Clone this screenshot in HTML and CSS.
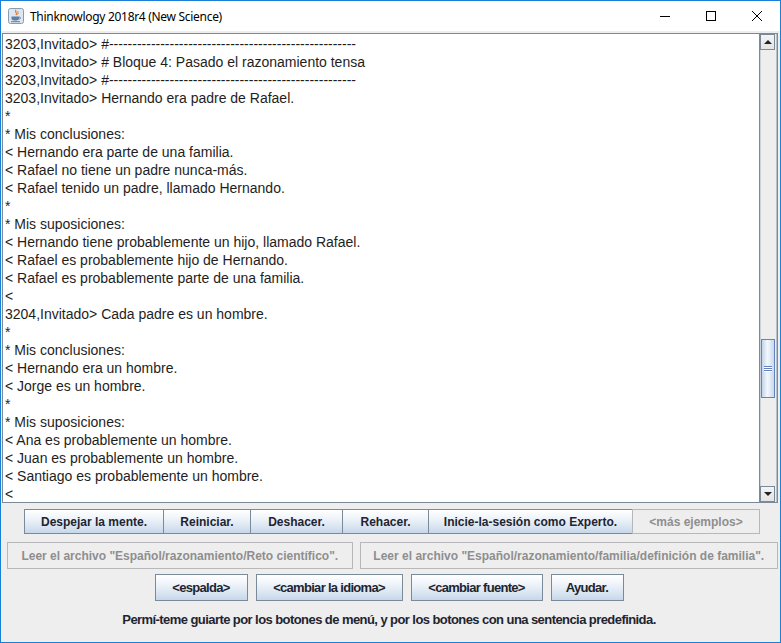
FILE: index.html
```html
<!DOCTYPE html>
<html lang="es">
<head>
<meta charset="utf-8">
<title>Thinknowlogy 2018r4 (New Science)</title>
<link rel="stylesheet" href="styles.css">
</head>
<body>
<div class="window">
  <div class="titlebar">
    <svg class="appicon" width="16" height="16" viewBox="0 0 16 16">
      <rect x="0.5" y="0.5" width="15" height="15" rx="2" fill="#dfe6ee" stroke="#8a9bb0"/>
      <path d="M8 2 C6 4 10 5 8 7" stroke="#e07a1f" stroke-width="1.2" fill="none"/>
      <path d="M10 3 C9 4 11 5 9.5 6.5" stroke="#e07a1f" stroke-width="1" fill="none"/>
      <path d="M3.5 8.5 H11 V10.5 C11 12 9.5 12.5 7.3 12.5 C5 12.5 3.5 12 3.5 10.5 Z" fill="#5b7fa8"/>
      <path d="M11 9 C13 9 13 11 11 11" stroke="#5b7fa8" stroke-width="1" fill="none"/>
      <rect x="3" y="13.2" width="9" height="1" fill="#5b7fa8"/>
    </svg>
    <span class="title">Thinknowlogy 2018r4 (New Science)</span>
    <div class="controls">
      <span class="ctl"><svg width="10" height="10" viewBox="0 0 10 10"><path d="M0 5.5H10" stroke="#000" stroke-width="1"/></svg></span>
      <span class="ctl"><svg width="10" height="10" viewBox="0 0 10 10"><rect x="0.5" y="0.5" width="9" height="9" fill="none" stroke="#000"/></svg></span>
      <span class="ctl"><svg width="10" height="10" viewBox="0 0 10 10"><path d="M0 0L10 10M10 0L0 10" stroke="#000" stroke-width="1"/></svg></span>
    </div>
  </div>
  <div class="body">
    <div class="scrollpane">
      <div class="text">
        <div class="ln">3203,Invitado&gt; #-----------------------------------------------------</div>
        <div class="ln">3203,Invitado&gt; # Bloque 4: Pasado el razonamiento tensa</div>
        <div class="ln">3203,Invitado&gt; #-----------------------------------------------------</div>
        <div class="ln">3203,Invitado&gt; Hernando era padre de Rafael.</div>
        <div class="ln">*</div>
        <div class="ln">* Mis conclusiones:</div>
        <div class="ln">&lt; Hernando era parte de una familia.</div>
        <div class="ln">&lt; Rafael no tiene un padre nunca-más.</div>
        <div class="ln">&lt; Rafael tenido un padre, llamado Hernando.</div>
        <div class="ln">*</div>
        <div class="ln">* Mis suposiciones:</div>
        <div class="ln">&lt; Hernando tiene probablemente un hijo, llamado Rafael.</div>
        <div class="ln">&lt; Rafael es probablemente hijo de Hernando.</div>
        <div class="ln">&lt; Rafael es probablemente parte de una familia.</div>
        <div class="ln">&lt;</div>
        <div class="ln">3204,Invitado&gt; Cada padre es un hombre.</div>
        <div class="ln">*</div>
        <div class="ln">* Mis conclusiones:</div>
        <div class="ln">&lt; Hernando era un hombre.</div>
        <div class="ln">&lt; Jorge es un hombre.</div>
        <div class="ln">*</div>
        <div class="ln">* Mis suposiciones:</div>
        <div class="ln">&lt; Ana es probablemente un hombre.</div>
        <div class="ln">&lt; Juan es probablemente un hombre.</div>
        <div class="ln">&lt; Santiago es probablemente un hombre.</div>
        <div class="ln">&lt;</div>
      </div>
      <div class="vscroll">
        <div class="sbtn"><span class="arrow-up"></span></div>
        <div class="track">
          <div class="thumb"><span class="grip"></span><span class="grip"></span><span class="grip"></span></div>
        </div>
        <div class="sbtn"><span class="arrow-down"></span></div>
      </div>
    </div>
    <div class="row row1">
      <button class="btn w1">Despejar la mente.</button>
      <button class="btn w2">Reiniciar.</button>
      <button class="btn w3">Deshacer.</button>
      <button class="btn w4">Rehacer.</button>
      <button class="btn w5">Inicie-la-sesión como Experto.</button>
      <button class="btn w6 disabled">&lt;más ejemplos&gt;</button>
    </div>
    <div class="row row2">
      <button class="btn disabled r2a">Leer el archivo "Español/razonamiento/Reto científico".</button>
      <button class="btn disabled r2b">Leer el archivo "Español/razonamiento/familia/definición de familia".</button>
    </div>
    <div class="row row3">
      <button class="btn narrow b1">&lt;espalda&gt;</button>
      <button class="btn narrow b2">&lt;cambiar la idioma&gt;</button>
      <button class="btn narrow b3">&lt;cambiar fuente&gt;</button>
      <button class="btn narrow b4">Ayudar.</button>
    </div>
    <div class="status">Permí-teme guiarte por los botones de menú, y por los botones con una sentencia predefinida.</div>
  </div>
</div>
</body>
</html>
```
FILE: styles.css
```css
* { box-sizing: border-box; }
html, body { margin: 0; padding: 0; }
body { background: #eeeeee; }

.window {
  width: 781px;
  height: 643px;
  border: 1px solid #1a7fd6;
  display: flex;
  flex-direction: column;
  background: #eeeeee;
  font-family: "Liberation Sans", Arial, sans-serif;
}

.titlebar {
  height: 30px;
  background: #ffffff;
  display: flex;
  align-items: center;
  flex-shrink: 0;
}
.appicon { margin-left: 7px; margin-right: 6px; }
.title {
  font-family: "Noto Sans", "Open Sans", sans-serif;
  font-size: 12px;
  color: #000;
  letter-spacing: -0.3px;
}
.controls { margin-left: auto; display: flex; height: 30px; }
.ctl {
  width: 46px;
  height: 30px;
  display: flex;
  align-items: center;
  justify-content: center;
}
.ctl svg { display: block; }

.body {
  flex: 1;
  display: flex;
  flex-direction: column;
  padding: 2px 2px 0 1px;
}

.scrollpane {
  height: 470px;
  border: 1px solid #7a8a99;
  background: #ffffff;
  display: flex;
}
.text {
  flex: 1;
  padding: 1px 0 0 2px;
  font-size: 14px;
  line-height: 18px;
  color: #1e1e1e;
  overflow: hidden;
}
.ln { white-space: pre; height: 18px; }

.vscroll {
  width: 18px;
  border-left: 1px solid #7a8a99;
  border-right: 2px solid #eeeeee;
  background: #eeeeee;
  display: flex;
  flex-direction: column;
  position: relative;
}
.vscroll::after {
  content: "";
  position: absolute;
  right: -2px;
  top: 0;
  bottom: 0;
  width: 1px;
  background: #b8c2cc;
}
.sbtn {
  height: 16px;
  border: 1px solid #7a8a99;
  background: linear-gradient(#f4f4f4, #e4e4e4);
  display: flex;
  align-items: center;
  justify-content: center;
}
.arrow-up, .arrow-down {
  width: 0; height: 0;
  border-left: 4px solid transparent;
  border-right: 4px solid transparent;
}
.arrow-up { border-bottom: 4px solid #222; }
.arrow-down { border-top: 4px solid #222; }
.track {
  flex: 1;
  display: flex;
  flex-direction: column;
  padding-top: 289px;
  border-left: 1px solid #c9d2da;
}
.thumb {
  height: 59px;
  border: 1px solid #6382bf;
  background: linear-gradient(90deg, #c2d4ea, #f4f8fc 45%, #c8d8ec);
  display: flex;
  flex-direction: column;
  align-items: center;
  justify-content: center;
  gap: 1px;
}
.grip { width: 8px; height: 1px; background: #6382bf; box-shadow: 0 1px 0 #fff; }

.row { display: flex; }
.row1 { margin-top: 6px; padding-left: 22px; height: 25px; }
.row2 { margin-top: 8px; padding-left: 5px; gap: 7px; height: 27px; }
.row3 { margin-top: 5px; justify-content: center; gap: 8px; height: 27px; padding-right: 2px; }

.btn {
  font-family: "Liberation Sans", Arial, sans-serif;
  font-weight: bold;
  font-size: 12px;
  color: #1e2430;
  border: 1px solid #7a8a99;
  background: linear-gradient(#ffffff 0%, #f2f6fb 30%, #dde8f3 65%, #c6d7ea 100%);
  padding: 0;
  margin: 0;
  height: 100%;
  white-space: nowrap;
}
.row1 .btn + .btn { margin-left: -1px; }
.btn.disabled {
  background: #eeeeee;
  color: #8e8e8e;
  border-color: #b8b8b8;
}

.w1 { width: 140px; }
.w2 { width: 88px; }
.w3 { width: 93px; }
.w4 { width: 87px; }
.w5 { width: 205px; }
.w6 { width: 128px; }

.r2a { width: 346px; }
.r2b { width: 419px; }

.narrow {
  font-size: 13px;
  letter-spacing: -0.7px;
}
.b1 { width: 93px; }
.b2 { width: 147px; }
.b3 { width: 132px; }
.b4 { width: 73px; }

.status {
  margin-top: 11px;
  text-align: center;
  font-weight: bold;
  font-size: 13px;
  letter-spacing: -0.57px;
  color: #1e2430;
  padding-right: 2px;
}
```
